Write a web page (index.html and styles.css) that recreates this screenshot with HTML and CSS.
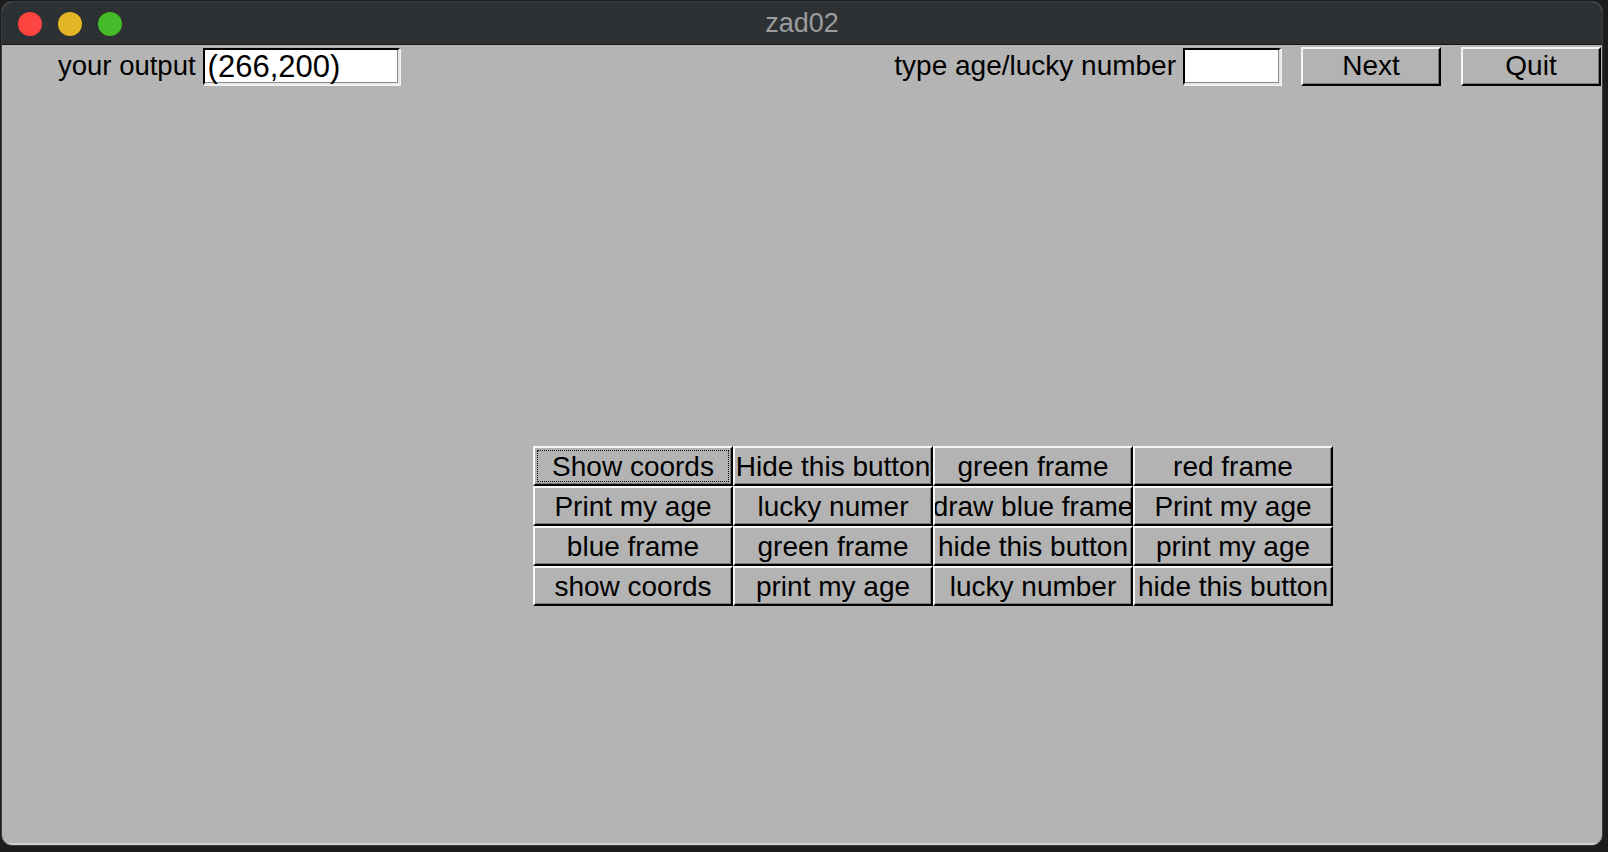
FILE: index.html
```html
<!DOCTYPE html>
<html>
<head>
<meta charset="utf-8">
<title>zad02</title>
<link rel="stylesheet" href="styles.css">
</head>
<body>
<div class="window">
  <div class="titlebar">
    <div class="lights">
      <span class="light red"></span>
      <span class="light yellow"></span>
      <span class="light green"></span>
    </div>
    <div class="title">zad02</div>
  </div>
  <div class="content">
    <div class="toprow">
      <div class="group left">
        <span class="label small">your output</span>
        <div class="entry wide">(266,200)</div>
      </div>
      <div class="group right">
        <span class="label">type age/lucky number</span>
        <div class="entry narrow"></div>
        <div class="btn top">Next</div>
        <div class="btn top">Quit</div>
      </div>
    </div>
    <div class="grid">
      <div class="btn cell focus"><span>Show coords</span></div>
      <div class="btn cell"><span>Hide this button</span></div>
      <div class="btn cell"><span>green frame</span></div>
      <div class="btn cell"><span>red frame</span></div>
      <div class="btn cell"><span>Print my age</span></div>
      <div class="btn cell"><span>lucky numer</span></div>
      <div class="btn cell"><span>draw blue frame</span></div>
      <div class="btn cell"><span>Print my age</span></div>
      <div class="btn cell"><span>blue frame</span></div>
      <div class="btn cell"><span>green frame</span></div>
      <div class="btn cell"><span>hide this button</span></div>
      <div class="btn cell"><span>print my age</span></div>
      <div class="btn cell"><span>show coords</span></div>
      <div class="btn cell"><span>print my age</span></div>
      <div class="btn cell"><span>lucky number</span></div>
      <div class="btn cell"><span>hide this button</span></div>
    </div>
  </div>
</div>
</body>
</html>
```
FILE: styles.css
```css
html, body {
  margin: 0;
  padding: 0;
  background: #1b1c1d;
  width: 1608px;
  height: 852px;
  overflow: hidden;
}

.window {
  margin: 2px 0 0 2px;
  width: 1600px;
  height: 843px;
  border-radius: 10px;
  overflow: hidden;
  background: #b4b4b4;
  display: flex;
  flex-direction: column;
  box-shadow: 0 0 0 1px #3a3c3e;
}

.titlebar {
  height: 43px;
  flex: none;
  background: #2e3133;
  border-bottom: 1px solid #141516;
  display: flex;
  align-items: center;
  justify-content: center;
  position: relative;
  box-sizing: border-box;
}

.lights {
  position: absolute;
  left: 16px;
  top: 10px;
  display: flex;
  gap: 16px;
}

.light {
  width: 24px;
  height: 24px;
  border-radius: 50%;
  display: block;
}
.red { background: #fe4441; }
.yellow { background: #e3b526; }
.green { background: #46bb29; }

.title {
  font-family: "Liberation Sans", Arial, sans-serif;
  font-size: 27px;
  color: #9a9c9e;
  line-height: 1;
  margin-top: 1px;
}

.content {
  flex: 1;
  display: flex;
  flex-direction: column;
  border-bottom: 2px solid #d2d2d2;
  font-family: "Liberation Sans", Arial, sans-serif;
  font-size: 28px;
  color: #000;
}

.toprow {
  display: flex;
  align-items: center;
  height: 40px;
  padding: 1px 1px 0 56px;
}

.group {
  display: flex;
  align-items: center;
}

.group.right {
  margin-left: auto;
}

.label {
  line-height: 1;
  margin-right: 7px;
}

.label.small {
  font-size: 27.5px;
}

.entry {
  box-sizing: border-box;
  height: 37px;
  background: #fff;
  border-style: solid;
  border-width: 2px;
  border-color: #000 #e8e8e8 #e8e8e8 #000;
  box-shadow: 1px 1px 0 #f4f4f4, inset -1px -1px 0 #8a8a8a;
  line-height: 33px;
  padding-left: 3px;
  font-size: 31px;
  white-space: nowrap;
}

.entry.wide { width: 197px; }
.entry.narrow { width: 98px; }

.btn {
  box-sizing: border-box;
  background: #b3b3b3;
  border-style: solid;
  border-width: 2px;
  border-color: #f6f6f6 #000 #000 #f6f6f6;
  box-shadow: inset -1px -1px 0 #7c7c7c;
  display: flex;
  align-items: center;
  justify-content: center;
  white-space: nowrap;
  overflow: hidden;
  line-height: 1;
}

.btn.top {
  width: 140px;
  height: 39px;
  margin-left: 20px;
}

.grid {
  margin: 360px 0 0 531px;
  display: grid;
  grid-template-columns: repeat(4, 200px);
  grid-auto-rows: 40px;
  width: 800px;
}

.cell span {
  display: block;
  flex: none;
  padding-top: 1px;
}

.focus {
  outline: 1px dotted #000;
  outline-offset: -5px;
}
```
